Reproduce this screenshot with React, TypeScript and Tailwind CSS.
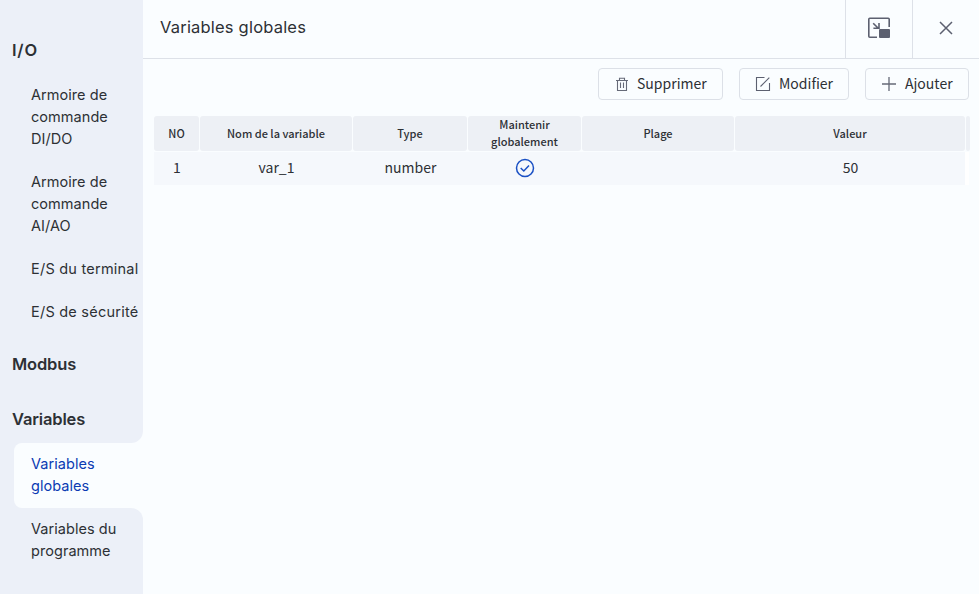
import React from "react";

const Item = ({ children, active = false, wide = false }: { children: React.ReactNode; active?: boolean; wide?: boolean }) => (
  <a className={"block whitespace-nowrap text-[14.5px] leading-[22px] " + (wide ? "tracking-[0.23px] " : "tracking-[0.05px] ") + (active ? "text-[#0b3bb3]" : "text-[#2d3035]")}>
    {children}
  </a>
);

const Heading = ({ children }: { children: React.ReactNode }) => (
  <h2 className="ml-3 text-[16.5px] font-semibold leading-6 tracking-[-0.15px] text-[#2d3035]">{children}</h2>
);

const Button = ({ className, icon, children }: { className: string; icon: React.ReactNode; children: React.ReactNode }) => (
  <button className={"flex h-8 items-center rounded-[4px] border border-[#dce0e7] pb-px text-[14px] leading-5 " + className}>
    {icon}
    <span className="pb-[2px]">{children}</span>
  </button>
);

const Th = ({ children }: { children?: React.ReactNode }) => (
  <div className="flex h-[35px] items-center justify-center rounded-[3px] bg-[#edf0f5] pb-px text-center text-[11px] font-medium leading-[17px]">
    {children}
  </div>
);

const Td = ({ children }: { children?: React.ReactNode }) => (
  <div className="flex items-center justify-center pb-[3px] pl-px">{children}</div>
);

export default function App() {
  return (
    <div className="flex h-[594px] w-[979px] overflow-hidden bg-[#fafdff] font-['Inter','Noto_Sans_CJK_SC',sans-serif] text-[#2d3035]">
      <aside className="flex w-[143px] shrink-0 flex-col">
        <div className="h-[443px] rounded-br-[12px] bg-[#ecf0f8] pt-[38px]">
          <Heading><span className="tracking-[0.8px]">I/O</span></Heading>
          <nav className="ml-[31px] mt-[22px] flex flex-col gap-[21px]">
            <Item>Armoire de<br />commande<br />DI/DO</Item>
            <Item>Armoire de<br />commande<br />AI/AO</Item>
            <Item wide>E/S du terminal</Item>
            <Item wide>E/S de sécurité</Item>
          </nav>
          <div className="mt-[29px] flex flex-col gap-[31px]">
            <Heading>Modbus</Heading>
            <Heading>Variables</Heading>
          </div>
        </div>
        <div className="h-[65px] bg-[#ecf0f8] pl-[14px]">
          <div className="h-full rounded-l-[8px] bg-[#fafdff] pl-[17px] pt-[10px]">
            <Item active>Variables<br />globales</Item>
          </div>
        </div>
        <div className="flex-1 rounded-tr-[12px] bg-[#ecf0f8] pl-[31px] pt-[10px]">
          <Item>Variables du<br />programme</Item>
        </div>
      </aside>

      <main className="flex min-w-0 flex-1 flex-col">
        <header className="flex h-[59px] border-b border-[#dde1e8]">
          <h1 className="flex flex-1 items-center pb-[4px] pl-[17px] text-[16.5px] tracking-[0.2px]">Variables globales</h1>
          <button className="flex w-[67px] items-center justify-center border-l border-[#dde1e8] pb-[2px]">
            <svg width="24" height="24" viewBox="0 0 24 24" fill="none" stroke="#5c6070" strokeWidth="1.6">
              <path d="M22.2 11V3.2Q22.2 2.2 21.2 2.2H2.8Q1.8 2.2 1.8 3.2V20.2Q1.8 21.2 2.8 21.2H10" />
              <path d="M6.2 7.2L11 12M12 7V12.2H6.4" />
              <rect x="12" y="13" width="11" height="9" rx="1" fill="#5c6070" stroke="none" />
            </svg>
          </button>
          <button className="flex w-[67px] items-center justify-center border-l border-[#dde1e8] pb-[2px]">
            <svg width="14" height="14" viewBox="0 0 14 14" stroke="#5c6070" strokeWidth="1.5">
              <path d="M1 1L13 13M13 1L1 13" />
            </svg>
          </button>
        </header>

        <section className="flex flex-1 flex-col pl-[11px] pr-[10px] font-['Noto_Sans_CJK_SC',sans-serif]">
          <div className="mt-[9px] flex justify-end gap-4">
            <Button className="w-[125px] gap-[8px] pl-[16px]" icon={
              <svg width="14" height="16" viewBox="0 0 14 16" fill="none" stroke="#666a78" strokeWidth="1.1">
                <path d="M1 4.5H13M4.5 4V2.2H9.5V4M2.5 4.5V14.5H11.5V4.5M5.5 6.5V12M8.5 6.5V12" />
              </svg>
            }>Supprimer</Button>
            <Button className="w-[110px] gap-[8px] pl-[15px]" icon={
              <svg width="16" height="16" viewBox="0 0 16 16" fill="none" stroke="#5c6070" strokeWidth="1.1">
                <path d="M9.5 1.5H1.5V14.5H14.5V7M5.5 10.5L14.3 1.7" />
              </svg>
            }>Modifier</Button>
            <Button className="w-[104px] gap-[9px] pl-[16px]" icon={
              <svg width="14" height="14" viewBox="0 0 14 14" stroke="#666a78" strokeWidth="1.3">
                <path d="M7 0V14M0 7H14" />
              </svg>
            }>Ajouter</Button>
          </div>

          <div className="mt-4 grid grid-cols-[45px_152px_114px_113px_152px_230px_4px] gap-px">
            <Th>NO</Th>
            <Th>Nom de la variable</Th>
            <Th>Type</Th>
            <Th>Maintenir<br />globalement</Th>
            <Th>Plage</Th>
            <Th>Valeur</Th>
            <Th />
          </div>
          <div className="mt-px flex h-[33px]">
            <div className="grid w-[811px] grid-cols-[45px_152px_114px_113px_152px_230px] gap-px bg-[#f5f8fc] text-[14px]">
              <Td>1</Td>
              <Td>var_1</Td>
              <Td>number</Td>
              <Td>
                <svg className="mt-[2px]" width="20" height="20" viewBox="0 0 20 20" fill="none" stroke="#1a50c4" strokeWidth="1.5">
                  <circle cx="10" cy="10" r="8.5" />
                  <path d="M5.7 10L8.8 13L14 7.5" />
                </svg>
              </Td>
              <Td />
              <Td>50</Td>
            </div>
            <div className="w-1 bg-white" />
          </div>
        </section>
      </main>
    </div>
  );
}
